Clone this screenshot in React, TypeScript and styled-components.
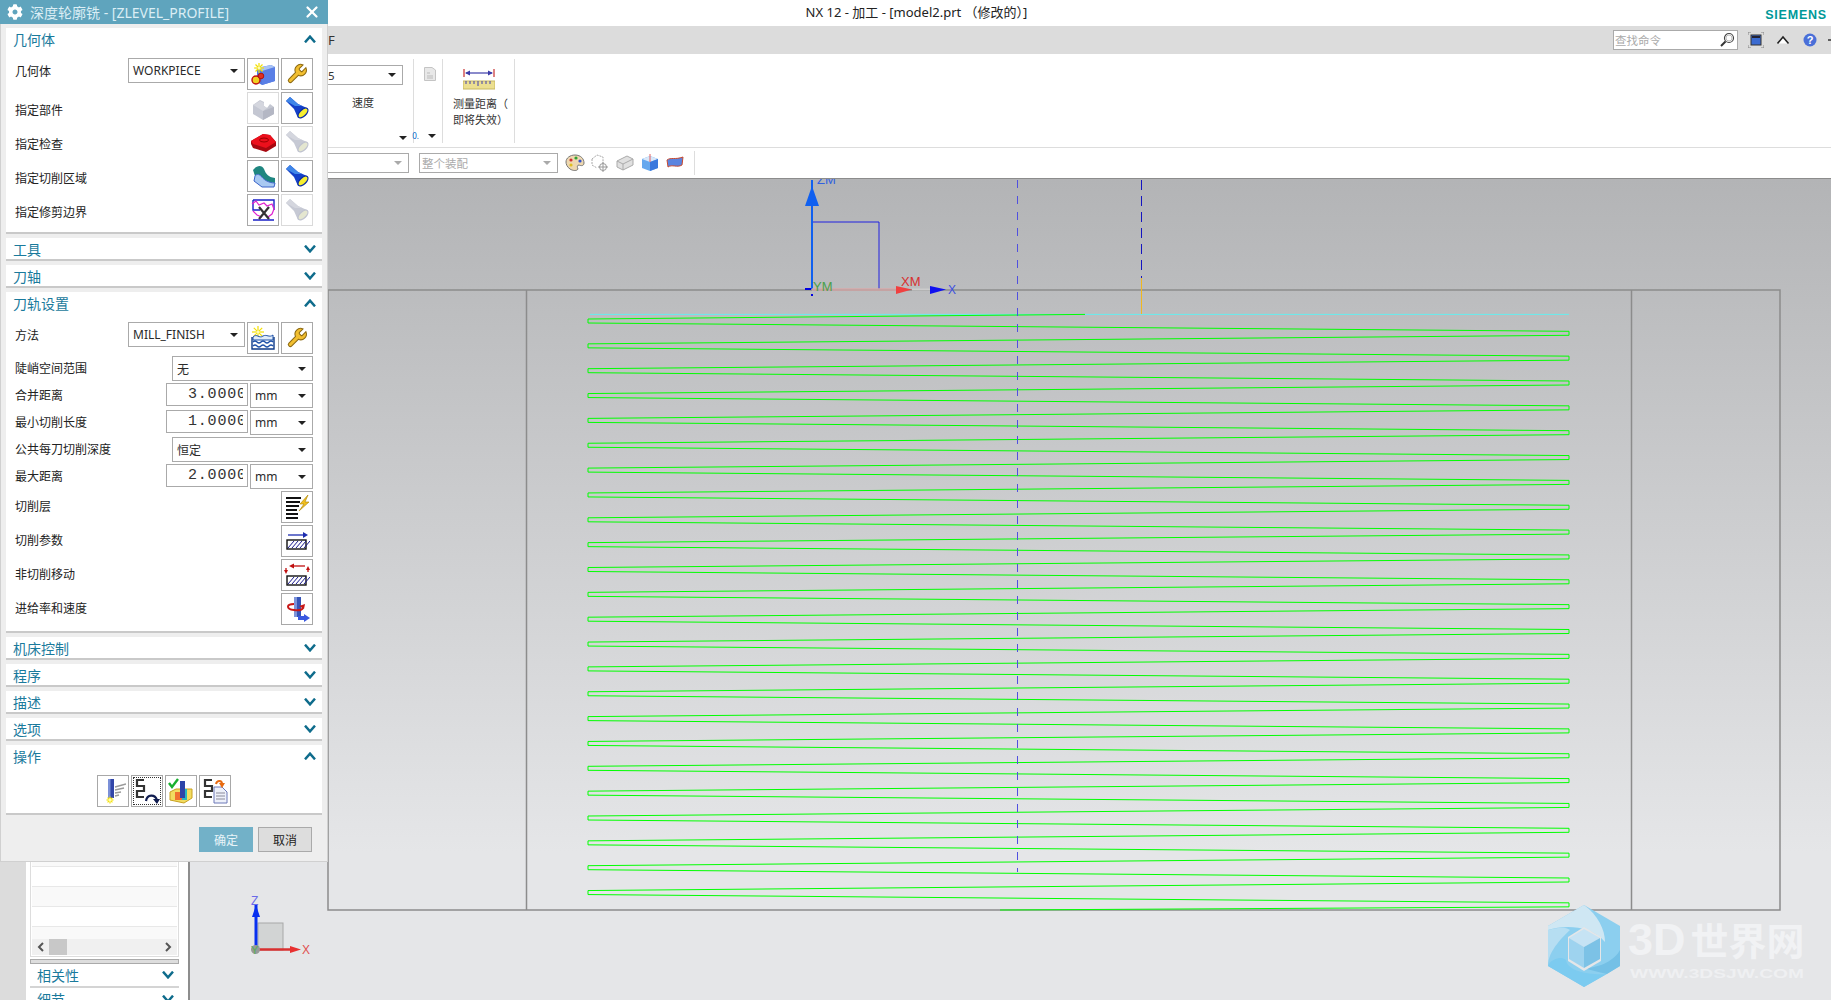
import React from "react";
import styled, { createGlobalStyle } from "styled-components";
import { X as CloseX } from "lucide-react";
import { FaCog } from "react-icons/fa";

const Global = createGlobalStyle`
  html, body { margin: 0; padding: 0; background: #fff; height: 1000px; overflow: hidden; }
  body { font-family: "Noto Sans CJK SC", "Liberation Sans", sans-serif; }
`;
const UI = `"Noto Sans", "Noto Sans CJK SC", sans-serif`;

const Page = styled.div`
  position: relative; width: 1831px; height: 1000px; overflow: hidden;
  display: flex; flex-direction: column; color: #222;
`;
const TitleBar = styled.div`
  height: 26px; flex: none; display: grid; grid-template-columns: 1fr auto 1fr; align-items: center; background: #fff;
`;
const AppTitle = styled.div`grid-column: 2; font: 13px ${UI}; color: #222; padding: 0 0 4px 2px;`;
const Brand = styled.div`
  grid-column: 3; justify-self: end; padding: 3px 4px 0 0; font: 700 12.5px "Liberation Sans", sans-serif; letter-spacing: .8px; color: #009999;
`;
const CommandBar = styled.div`
  height: 28px; flex: none; background: #dcdcdc; display: flex; align-items: center; padding-left: 328px; font: 13px ${UI}; color: #333;
`;
const CommandRight = styled.div`margin-left: auto; display: flex; align-items: center; margin-right: -11.5px;`;
const SearchBox = styled.div`
  width: 125px; height: 20px; box-sizing: border-box; background: #fff; border: 1px solid #aaa; display: flex; align-items: center; justify-content: space-between;
  font: 11.5px ${UI}; color: #aaa; padding: 0 2px 0 1px; margin-right: 4.5px;
`;
const TopIcon = styled.span<{ $w?: number }>`display: flex; width: ${p => p.$w ?? 27}px; justify-content: center;`;
const Ribbon = styled.div`height: 93px; flex: none; background: #fff; display: flex; align-items: flex-start;`;
const RibbonGroup = styled.div<{ $w: number }>`
  width: ${p => p.$w}px; height: 84px; margin-top: 5px; box-sizing: border-box; border-right: 1px solid #ddd; display: flex; flex-direction: column; font: 11px ${UI}; color: #333;
`;
const SpeedCol = styled.div`width: 103px; margin-left: 300px; padding-top: 6px; display: flex; flex: 1; flex-direction: column;`;
const SpeedLabel = styled.div`margin-top: 9px; padding-left: 52px; line-height: 18px;`;
const GroupCaret = styled.div<{ $nudge?: number; $pad?: number }>`
  margin-top: auto; margin-bottom: ${p => p.$pad ?? 3}px; margin-right: ${p => p.$nudge ?? 0}px; align-self: flex-end; display: flex; align-items: center; gap: 9px; line-height: 8px; font-size: 8px; color: #06c;
`;
const DocIconWrap = styled.div`padding: 8px 0 0 10px;`;
const RulerWrap = styled.div`padding: 10px 0 0 20px; height: 22px;`;
const RulerText = styled.div`padding: 5px 0 0 10px; line-height: 16px; white-space: nowrap;`;
const Toolbar = styled.div`
  height: 32px; flex: none; box-sizing: border-box; background: #fff; border-top: 1px solid #ddd; border-bottom: 1px solid #8c8c8c; display: flex; align-items: center; padding-left: 300px;
`;
const ToolSelect = styled.div<{ $w: number; $gap?: number; $indent?: number; $live?: boolean }>`
  width: ${p => p.$w}px; height: 20px; box-sizing: border-box; border: 1px solid #aaa; display: flex; align-items: center; justify-content: space-between; padding: 0 6px 0 ${p => p.$indent ?? 2}px; font: 11.5px ${UI}; color: ${p => (p.$live ? "#333" : "#aaa")}; margin-right: ${p => p.$gap ?? 10}px;
`;
const ToolIcons = styled.div`display: flex; gap: 5px; margin-left: 7px;`;
const ToolSep = styled.div`width: 1px; height: 24px; background: #ddd; margin-left: 9px;`;
const Workspace = styled.div`flex: 1; min-height: 0; display: flex;`;
const Sidebar = styled.div`width: 190px; flex: none; background: #dcdcdc; padding-left: 26px; box-sizing: border-box; display: flex;`;
const NavPanel = styled.div`flex: 1; background: #fff; border-right: 2px solid #8d8d8d; display: flex; flex-direction: column; padding: 0 9px 0 4px; min-width: 0;`;
const ListBox = styled.div`flex: 1; min-height: 0; border: 1px solid #ddd; border-width: 0 1px 1px; display: flex; flex-direction: column; justify-content: flex-end; padding: 0 1px 1px; overflow: hidden;`;
const ListRow = styled.div<{ $alt?: boolean; $h?: number }>`
  flex: none; height: ${p => p.$h ?? 19}px; background: ${p => (p.$alt ? "#f9f9f9" : "#fff")}; border-bottom: 1px solid ${p => (p.$h ? "transparent" : "#e8e8e8")};
`;
const HScroll = styled.div`height: 16px; flex: none; background: #f0f0f0; display: flex; align-items: center; justify-content: space-between; position: relative; padding: 0 5px;`;
const HThumb = styled.div`position: absolute; left: 17px; top: 0; width: 18px; height: 16px; background: #c8c8c8;`;
const Splitter = styled.div`height: 5px; flex: none; margin-top: 2px; box-sizing: border-box; border: 1px solid #aaa; background: #ddd;`;
const NavHeader = styled.div<{ $h: number }>`
  height: ${p => p.$h}px; flex: none; overflow: hidden; box-sizing: border-box; display: flex; align-items: flex-start; justify-content: space-between; padding: 0 5px 0 7px; font: 14px/23px "Noto Sans CJK SC", sans-serif; color: #1a7a9c;
  border-bottom: ${p => (p.$h > 20 ? "2px solid #d4d4d4" : "none")};
`;
const NavChevron = styled.span`display: flex; padding-top: 7px;`;
const Viewport = styled.div`
  flex: 1; min-width: 0; background: linear-gradient(180deg, #b3b4b6 0%, #e5e6e8 82%, #e5e6e8 100%);
`;
const Scene = styled.svg`display: block; width: 100%; height: 100%;`;

const Dialog = styled.div`
  position: absolute; left: 0; top: 0; width: 328px; height: 862px; background: #eeeeee; box-sizing: border-box; border: 1px solid #d0d0d0; border-width: 0 1px 1px 1px; display: flex; flex-direction: column;
`;
const DialogBar = styled.div`
  height: 24px; flex: none; margin: 0 -1px; background: #5fa4bd; display: flex; align-items: center; gap: 7px; padding: 0 7px; color: #fff;
`;
const DialogTitle = styled.div`flex: 1; font: 14px ${UI}; color: #dbeef5; white-space: nowrap;`;
const Sections = styled.div`padding: 4px 5px 0; display: flex; flex-direction: column; gap: 4px;`;
const Section = styled.div`background: #fff; border-bottom: 2px solid #c9c9c9;`;
const SectionHead = styled.div<{ $open?: boolean }>`
  height: ${p => (p.$open ? 30 : 21)}px; box-sizing: border-box; padding: ${p => (p.$open ? "0 6px 8px 7px" : "0 6px 0 7px")}; display: flex; align-items: center; justify-content: space-between; font: 14px "Noto Sans CJK SC", sans-serif; color: #1a7a9c;
`;
const SectionBody = styled.div`padding: 0 9px 6px; display: flex; flex-direction: column; gap: 2px;`;
const Row = styled.div`display: flex; align-items: center; gap: 2px; min-height: 25px;`;
const Label = styled.div<{ $up?: number; $down?: number; $top?: boolean }>`
  flex: 1; font: 12px "Noto Sans CJK SC", sans-serif; color: #222; white-space: nowrap;
  padding: ${p => p.$down ?? 0}px 0 ${p => p.$up ?? 0}px;
  ${p => (p.$top ? "align-self: flex-start; line-height: 25px;" : "")}
`;
const Select = styled.div<{ $w: number; $top?: boolean }>`
  width: ${p => p.$w}px; height: 25px; box-sizing: border-box; background: #fff; border: 1px solid #aaa; display: flex; align-items: center; justify-content: space-between; padding: 0 6px 0 4px; font: 12px ${UI}; color: #2a2a2a; white-space: nowrap;
  ${p => (p.$top ? "align-self: flex-start;" : "")}
`;
const NumberBox = styled.div`
  width: 82px; height: 23px; align-self: flex-start; box-sizing: border-box; background: #fff; border: 1px solid #aaa; padding: 0 4px 0 21px; display: flex; align-items: center;
`;
const NumberText = styled.span`display: block; overflow: hidden; white-space: nowrap; font: 15px "Liberation Mono", monospace; letter-spacing: .8px; color: #333; width: 100%;`;
const Caret = styled.span<{ $muted?: boolean }>`
  flex: none; width: 0; height: 0; border-left: 4px solid transparent; border-right: 4px solid transparent; border-top: 4px solid ${p => (p.$muted ? "#aaa" : "#222")};
`;
const IconBtn = styled.div<{ $dim?: boolean; $focus?: boolean }>`
  position: relative; flex: none; width: 32px; height: 32px; box-sizing: border-box; background: #fff; border: 1px solid ${p => (p.$dim ? "#dadada" : "#a8a8a8")}; display: flex; align-items: center; justify-content: center;
  outline: ${p => (p.$focus ? "1px dotted #333" : "none")}; outline-offset: -3px;
`;
const ActionRow = styled.div`display: flex; justify-content: center; gap: 2px; padding: 0 0 6px;`;
const Footer = styled.div`display: flex; justify-content: flex-end; gap: 5px; padding: 12px 15px 0 0;`;
const Btn = styled.div<{ $primary?: boolean }>`
  width: 54px; height: 25px; box-sizing: border-box; display: flex; align-items: center; justify-content: center; font: 12px "Noto Sans CJK SC", sans-serif;
  background: ${p => (p.$primary ? "#72b1c8" : "#dddddd")}; color: ${p => (p.$primary ? "#e8f4f8" : "#222")}; border: 1px solid ${p => (p.$primary ? "#72b1c8" : "#aaa")};
`;

const Chevron = ({ up }: { up?: boolean }) => (
  <svg width={12} height={8} viewBox="0 0 12 8">
    <polyline points={up ? "1,7.4 6,1.6 11,7.4" : "1,.6 6,6.4 11,.6"} fill="none" stroke="#0f6c8c" strokeWidth="2.4" />
  </svg>
);
const ScrollArrow = ({ left }: { left?: boolean }) => (
  <svg width={7} height={10} viewBox="0 0 7 10">
    <polyline points={left ? "6,1 2,5 6,9" : "1,1 5,5 1,9"} fill="none" stroke="#555" strokeWidth="2" />
  </svg>
);

const I = ({ children, s = 26 }: { children: React.ReactNode; s?: number }) => (
  <svg width={s} height={s} viewBox="0 0 26 26">{children}</svg>
);
const Star = ({ x, y, r = 5 }: { x: number; y: number; r?: number }) => (
  <g stroke="#f4e000" strokeWidth="1.2">
    <line x1={x - r} y1={y} x2={x + r} y2={y} /><line x1={x} y1={y - r} x2={x} y2={y + r} />
    <line x1={x - r * .7} y1={y - r * .7} x2={x + r * .7} y2={y + r * .7} /><line x1={x - r * .7} y1={y + r * .7} x2={x + r * .7} y2={y - r * .7} />
    <circle cx={x} cy={y} r={1.5} fill="#fffbb0" stroke="none" />
  </g>
);
const GeomIcon = () => (
  <I>
    <polygon points="7,7 21,4 25,6 25,20 12,24 7,21" fill="#4f78e0" />
    <polygon points="12,10 25,6 25,20 12,24" fill="#5a7fe6" />
    <polygon points="7,7 21,4 25,6 12,10" fill="#a9c3f5" />
    <Star x={9} y={7} r={5} />
    <circle cx={6} cy={19} r={4} fill="#f0d020" stroke="#c01010" strokeWidth="1.4" />
    <circle cx={11} cy={15} r={2.8} fill="#e03020" stroke="#b01010" />
  </I>
);
const WrenchIcon = () => (
  <I>
    <path transform="translate(1.5 1.5) scale(.95)" d="M14.7 6.3a1 1 0 0 0 0 1.4l1.6 1.6a1 1 0 0 0 1.4 0l3.77-3.77a6 6 0 0 1-7.94 7.94l-6.91 6.91a2.12 2.12 0 0 1-3-3l6.91-6.91a6 6 0 0 1 7.94-7.94l-3.76 3.76z" fill="#f2bf30" stroke="#8d6a12" strokeWidth="1.1" />
  </I>
);
const PartIcon = () => (
  <I>
    <polygon points="3,10 10,5 14,7 14,11 17,13 20,9 24,12 24,19 13,25 3,19" fill="#c4c7d2" />
    <polygon points="13,16 24,12 24,19 13,25" fill="#b4b7c4" />
    <polygon points="3,10 10,6 14,8 14,11 17,13 13,16" fill="#d4d6de" />
  </I>
);
const Flash = ({ dim }: { dim?: boolean }) => (
  <I>
    <polygon points="2,6 6,2 14,9 23,13 14,23 10,14" fill={dim ? "#c6c9d4" : "#1440c8"} />
    <polygon points="2,6 6,2 14,9 18,11 11,11" fill={dim ? "#d4d6de" : "#3f86e8"} />
    <ellipse cx="19" cy="18" rx="6.2" ry="3.2" transform="rotate(-45 19 18)" fill={dim ? "#e4e6d0" : "#f6ee30"} stroke={dim ? "#bfc2cf" : "#0a2aa0"} strokeWidth="1.3" />
  </I>
);
const CheckIcon = () => (
  <I>
    <polygon points="1,12 13,5 20,6 26,13 26,17 16,23 3,19 1,15" fill="#a80810" />
    <polygon points="1,12 13,5 20,6 26,13 16,19 3,15" fill="#ec101c" />
    <ellipse cx="14" cy="11" rx="4.5" ry="2" fill="none" stroke="#900" strokeWidth="1" />
  </I>
);
const AreaIcon = () => (
  <I>
    <path d="M3,7 C7,2 12,2 14,6 C16,11 18,14 25,15 L25,20 C18,20 13,16 11,13 C9,11 6,11 5,13 Z" fill="#1f8680" />
    <path d="M5,13 C6,11 9,11 11,13 C13,16 18,20 25,20 L24,24 L12,24 L4,18 Z" fill="#a9c9f2" stroke="#3a62c8" strokeWidth="1" />
  </I>
);
const TrimIcon = () => (
  <I>
    <path d="M3,3 H24 V13 M3,3 V13 H10 M3,23 H24" fill="none" stroke="#1a20c8" strokeWidth="1.4" />
    <path d="M2,7 L6,4 L9,8 L14,6 L17,9 L22,7 L24,12 L22,17 L18,20 M3,14 L7,18 L12,20" fill="none" stroke="#e020d0" strokeWidth="1.2" />
    <path d="M9,10 L19,22 M19,10 L9,22" stroke="#333" strokeWidth="2.2" />
  </I>
);
const MethodIcon = () => (
  <I>
    <Star x={8} y={7} r={6} />
    <path d="M3,12 C7,8 9,14 13,11 C17,9 19,13 23,10 V15 H3 Z" fill="#e0ecfa" stroke="#1d50a8" />
    <path d="M3,17 q2,-2 4,0 t4,0 t4,0 t4,0 t4,0 M3,21 q2,-2 4,0 t4,0 t4,0 t4,0 t4,0" fill="none" stroke="#1d50a8" strokeWidth="1.3" />
    <path d="M2,12 V24 H24 V12" fill="none" stroke="#0e3a88" strokeWidth="1.4" />
  </I>
);
const LayersIcon = () => (
  <I>
    <path d="M2,4 H17 M2,8 H16 M2,12 H15 M2,16 H13 M2,20 H14 M2,24 H14" stroke="#111" strokeWidth="2" />
    <polygon points="24,1 16,10 20,10 15,17 25,8 21,8" fill="#f2c020" stroke="#a88000" strokeWidth=".6" />
  </I>
);
const Hatch = ({ y = 12 }: { y?: number }) => (
  <>
    <rect x="3" y={y} width="19" height="9" fill="#fff" stroke="#111" strokeWidth="1.4" />
    {[0, 4, 8, 12, 16].map(o => <line key={o} x1={4 + o} y1={y + 8} x2={10 + o} y2={y + 1} stroke="#1a1a90" strokeWidth="1" />)}
  </>
);
const CutParamIcon = () => (
  <I>
    <path d="M4,7 H20" stroke="#1c2cb0" strokeWidth="1.3" /><polygon points="19,4 24,7 19,10" fill="#1c2cb0" />
    <Hatch />
  </I>
);
const NonCutIcon = () => (
  <I>
    <path d="M7,4 H21" stroke="#c01010" strokeWidth="1.3" /><polygon points="10,1.5 5,4 10,6.5" fill="#c01010" />
    <path d="M2,6 V9 M24,6 V10" stroke="#c01010" strokeWidth="1.3" />
    <polygon points="0,8 4,8 2,12" fill="#c01010" /><polygon points="22,8 26,8 24,4" fill="#c01010" />
    <Hatch y={14} />
  </I>
);
const FeedIcon = () => (
  <I>
    <rect x="10" y="1" width="7" height="20" fill="#3554b8" />
    <rect x="10" y="1" width="3" height="20" fill="#7e94da" />
    <path d="M10,8 C2,8 2,13 10,14 C16,15 21,13 18,10" fill="none" stroke="#c81818" strokeWidth="2" />
    <polygon points="15,10 21,8 20,13" fill="#c81818" />
    <path d="M14,22 H21" stroke="#3a58e0" strokeWidth="4" /><polygon points="20,18 26,22 20,26" fill="#3a58e0" />
  </I>
);
const GenIcon = () => (
  <I>
    <rect x="8" y="1" width="6" height="19" fill="#3246a8" /><rect x="8" y="1" width="2.5" height="19" fill="#7b90d8" />
    <path d="M15,9 L26,6 M15,12 L24,10 M15,15 L21,14 M15,18 L19,17" stroke="#9a9a9a" strokeWidth="1.4" />
    <Star x={10} y={22} r={3.5} />
  </I>
);
const Snake = () => <path d="M11,2 H4 V8 H11 V13 H4 V19 H11" fill="none" stroke="#333" strokeWidth="2.2" transform="translate(-1 0)" />;
const ReplayIcon = () => (
  <I>
    <Snake />
    <path d="M12,23 C13,16 21,16 23,22" fill="none" stroke="#101c50" strokeWidth="2.2" />
    <polygon points="19,21 26,21 23,26" fill="#101c50" />
  </I>
);
const VerifyIcon = () => (
  <I>
    <polygon points="2,14 8,11 24,11 24,20 16,25 2,22" fill="#f2dc60" stroke="#c8a020" />
    <rect x="7" y="14" width="7" height="8" fill="#f07030" /><rect x="14" y="11" width="5" height="11" fill="#28b8c0" />
    <rect x="12" y="3" width="5" height="17" fill="#2c44a8" />
    <path d="M1,5 L4,9 L10,1" fill="none" stroke="#18b030" strokeWidth="2.4" />
  </I>
);
const ListIcon = () => (
  <I>
    <Snake />
    <polygon points="12,9 20,9 25,14 25,25 12,25" fill="#eef1fa" stroke="#6c78b8" />
    <path d="M14,15 H23 M14,18 H23 M14,21 H23" stroke="#8a8a9a" />
    <path d="M14,6 C15,2 20,2 20,6" fill="none" stroke="#e86a10" strokeWidth="2" />
    <polygon points="17,5 23,5 20,10" fill="#e86a10" />
  </I>
);

const rowsK = Array.from({ length: 24 }, (_, k) => k);
const P = 24.85;
const Toolpath = () => (
  <g fill="none" stroke="#00ff00" strokeWidth="1">
    <line x1="588" y1="319" x2="1085" y2="314.4" />
    {rowsK.map(k => {
      const L = 319 + k * P;
      const R = 331.3 + k * P;
      const d = `M588 ${L} V${L + 4} L1569 ${R} V${R + 4} ${k < 23 ? `L588 ${L + P}` : "L1000 910"}`;
      return <path key={k} d={d} />;
    })}
  </g>
);
const Hexagon = () => (
  <g>
    <polygon points="1584,905 1620,926 1620,966 1584,987 1548,966 1548,926" fill="#8ccfef" />
    <path d="M1584,905 L1548,926 L1548,930 C1565,925 1590,925 1605,942 C1605,930 1598,915 1584,905 Z" fill="#cfe7f3" />
    <path d="M1548,930 L1548,966 C1548,950 1565,935 1570,930 C1565,926 1555,928 1548,930 Z" fill="#b6def2" />
    <path d="M1548,966 L1584,987 L1607,974 C1590,975 1568,972 1566,960 C1560,955 1550,960 1548,966 Z" fill="#7ccbf0" />
    <path d="M1620,950 L1620,966 L1607,974 C1598,972 1590,970 1584,968 C1600,968 1615,960 1620,950 Z" fill="#74c0e6" />
    <polygon points="1568,937 1584,927 1601,937 1601,961 1584,971 1568,961" fill="#e5e6e8" />
    <polygon points="1569,938 1584,929 1600,938 1584,947" fill="#c6e3f4" />
    <polygon points="1569,938 1584,947 1584,968 1569,959" fill="#9ed3ef" />
    <polygon points="1600,938 1584,947 1584,968 1600,959" fill="#7cc2e6" />
  </g>
);

const Sec = ({ title }: { title: string }) => (
  <Section><SectionHead>{title}<Chevron /></SectionHead></Section>
);

export default function App() {
  return (
    <>
      <Global />
      <Page>
        <TitleBar>
          <AppTitle>NX 12 - 加工 - [model2.prt （修改的）]</AppTitle>
          <Brand>SIEMENS</Brand>
        </TitleBar>
        <CommandBar>
          F
          <CommandRight>
            <SearchBox>
              查找命令
              <svg width="16" height="16" viewBox="0 0 16 16"><circle cx="10" cy="6" r="4.5" fill="#fff" stroke="#444" strokeWidth="1.2" /><circle cx="10" cy="6" r="3" fill="none" stroke="#bbb" /><path d="M6.5,9.5 L2,14" stroke="#333" strokeWidth="2" /></svg>
            </SearchBox>
            <TopIcon><svg width="16" height="16" viewBox="0 0 16 16"><path d="M0,3 V0 H3 M13,0 H16 V3 M16,13 V16 H13 M3,16 H0 V13" fill="none" stroke="#888" /><rect x="3" y="3" width="10" height="10" fill="#3a6ad0" stroke="#333" /><rect x="4" y="4" width="8" height="2" fill="#223" /></svg></TopIcon>
            <TopIcon><svg width="14" height="10" viewBox="0 0 14 10"><polyline points="1.5,8.5 7,2 12.5,8.5" fill="#fff" stroke="#222" strokeWidth="1.6" /></svg></TopIcon>
            <TopIcon><svg width="14" height="14" viewBox="0 0 14 14"><circle cx="7" cy="7" r="6.5" fill="#4a6fd8" /><text x="7" y="11" textAnchor="middle" fontSize="11" fontWeight="700" fontFamily="Liberation Sans" fill="#fff">?</text></svg></TopIcon>
            <TopIcon $w={19}><svg width="14" height="8" viewBox="0 0 14 8"><path d="M2,4 H12 M6,1 V7" stroke="#333" strokeWidth="1.4" /></svg></TopIcon>
          </CommandRight>
        </CommandBar>
        <Ribbon>
          <RibbonGroup $w={414}>
            <SpeedCol>
              <ToolSelect $w={103} $gap={0} $indent={27} $live>5<Caret /></ToolSelect>
              <SpeedLabel>速度</SpeedLabel>
              <GroupCaret $nudge={-4}><Caret /></GroupCaret>
            </SpeedCol>
          </RibbonGroup>
          <RibbonGroup $w={29}>
            <DocIconWrap><svg width="12" height="14" viewBox="0 0 12 14"><path d="M.5,.5 H8 L11.5,3 V13.5 H.5 Z" fill="#e8e8e8" stroke="#c4c4c4" /><path d="M3,6 H6 M3,9 H9 M3,11 H9" stroke="#bbb" /></svg></DocIconWrap>
            <GroupCaret $nudge={6} $pad={3}>0.<Caret /></GroupCaret>
          </RibbonGroup>
          <RibbonGroup $w={72}>
            <RulerWrap>
              <svg width="32" height="21" viewBox="0 0 32 21"><path d="M1,0 V8 M31,0 V8" stroke="#c83030" strokeWidth="1.2" /><path d="M3,4 H29" stroke="#3c3ca8" strokeWidth="1.2" /><polygon points="2,4 7,1.5 7,6.5" fill="#3c3ca8" /><polygon points="30,4 25,1.5 25,6.5" fill="#3c3ca8" /><rect x="0" y="12" width="32" height="8" fill="#ecdf90" stroke="#c8b860" /><path d="M3,12 V15 M7,12 V15 M11,12 V15 M15,12 V17 M19,12 V15 M23,12 V15 M27,12 V15" stroke="#4040b0" /></svg>
            </RulerWrap>
            <RulerText>测量距离（<br />即将失效）</RulerText>
          </RibbonGroup>
        </Ribbon>
        <Toolbar>
          <ToolSelect $w={109}><span /><Caret $muted /></ToolSelect>
          <ToolSelect $w={139} $gap={0}>整个装配<Caret $muted /></ToolSelect>
          <ToolIcons>
            <svg width="20" height="18" viewBox="0 0 20 18"><path d="M10,1 C16,1 19,5 19,9 C19,12 16,12 14,11 C12,11 12,13 13,15 C12,17 8,17 5,15 C2,13 1,10 1,8 C1,4 5,1 10,1 Z" fill="#eed8b0" stroke="#777" /><circle cx="6" cy="6" r="1.6" fill="#d03030" /><circle cx="11" cy="4" r="1.6" fill="#30a030" /><circle cx="15" cy="7" r="1.6" fill="#3050d0" /><circle cx="6" cy="11" r="1.6" fill="#e0c020" /></svg>
            <svg width="20" height="18" viewBox="0 0 20 18"><path d="M2,5 L7,1 L13,3 L13,9 M2,5 V11 L7,14" fill="none" stroke="#aaa" strokeDasharray="2 1" /><circle cx="13" cy="13" r="3.5" fill="none" stroke="#999" /><path d="M13,8 V18 M8,13 H18" stroke="#999" /></svg>
            <svg width="20" height="18" viewBox="0 0 20 18"><path d="M2,7 L12,2 L18,5 L18,11 L8,16 L2,13 Z" fill="#e0e0e0" stroke="#aaa" /><path d="M2,7 L8,10 L18,5 M8,10 V16" fill="none" stroke="#aaa" /></svg>
            <svg width="20" height="18" viewBox="0 0 20 18"><polygon points="2,5 10,2 18,5 18,14 10,17 2,14" fill="#66a8ee" /><polygon points="2,5 10,2 18,5 10,8" fill="#d8e8fa" /><polygon points="10,8 18,5 18,14 10,17" fill="#3a78dd" /><path d="M10,0 V8" stroke="#e06060" /></svg>
            <svg width="20" height="18" viewBox="0 0 20 18"><path d="M2,6 C6,3 10,6 18,3 L17,11 C12,14 7,10 3,13 Z" fill="#5a84e0" stroke="#c84a30" /></svg>
          </ToolIcons>
          <ToolSep />
        </Toolbar>
        <Workspace>
          <Sidebar>
            <NavPanel>
              <ListBox>
                <ListRow $alt /><ListRow /><ListRow $alt /><ListRow /><ListRow $alt $h={11} />
                <HScroll><ScrollArrow left /><HThumb /><ScrollArrow /></HScroll>
              </ListBox>
              <Splitter />
              <NavHeader $h={24}>相关性<NavChevron><Chevron /></NavChevron></NavHeader>
              <NavHeader $h={12}>细节<NavChevron><Chevron /></NavChevron></NavHeader>
            </NavPanel>
          </Sidebar>
          <Viewport>
            <Scene viewBox="190 179 1641 821">
              <g fill="none" stroke="#8c8c8c" strokeWidth="1.5">
                <polyline points="328,290 1780,290 1780,910 328,910 328,290" />
                <line x1="526.5" y1="290" x2="526.5" y2="910" />
                <line x1="1631.5" y1="290" x2="1631.5" y2="910" />
              </g>
              <line x1="590" y1="314.4" x2="1569" y2="314.4" stroke="#66eeee" strokeWidth="1" />
              <Toolpath />
              <line x1="1017.5" y1="180" x2="1017.5" y2="872" stroke="#5050e0" strokeDasharray="8 8" />
              <line x1="1141.5" y1="180" x2="1141.5" y2="278" stroke="#1414c0" strokeDasharray="10 6" />
              <line x1="1141.5" y1="278" x2="1141.5" y2="314" stroke="#f0b820" />
              <polyline points="812,222 879,222 879,289" fill="none" stroke="#2020e0" />
              <line x1="812" y1="180" x2="812" y2="289" stroke="#1060f0" strokeWidth="2" />
              <polygon points="812,186 805,206 819,206" fill="#1060f0" />
              <rect x="811" y="294" width="2" height="2" fill="#0000e0" />
              <rect x="805" y="288" width="6" height="2" fill="#0000e0" />
              <rect x="812" y="288" width="86" height="3" fill="#d8a8a8" opacity=".7" />
              <polygon points="896,286 912,289.5 896,294" fill="#f04040" />
              <rect x="912" y="288.5" width="20" height="2" fill="#ccc" />
              <polygon points="930,286 946,289.5 930,294" fill="#1010f0" />
              <text x="817" y="184" fontSize="13" fontFamily="Liberation Sans" fill="#3060e0">ZM</text>
              <text x="813" y="291" fontSize="13" fontFamily="Liberation Sans" fill="#4aa04a">YM</text>
              <text x="901" y="286" fontSize="13" fontFamily="Liberation Sans" fill="#d83030">XM</text>
              <text x="948" y="294" fontSize="12" fontFamily="Liberation Sans" fill="#4050e0">X</text>

              <rect x="258" y="923" width="25" height="27" fill="#d2d4d4" stroke="#a8a8a8" />
              <line x1="256" y1="905" x2="256" y2="948" stroke="#0830f0" strokeWidth="3" />
              <polygon points="256,905 252,917 260,917" fill="#0830f0" />
              <line x1="258" y1="949.5" x2="292" y2="949.5" stroke="#d83030" strokeWidth="2.5" />
              <polygon points="290,946 301,949.5 290,953" fill="#e83030" />
              <circle cx="255.5" cy="949.5" r="4.5" fill="#999" />
              <text x="251" y="905" fontSize="12" fontFamily="Liberation Sans" fill="#6a6ae8">Z</text>
              <text x="251" y="954" fontSize="11" fontFamily="Liberation Sans" fill="#58b058">Y</text>
              <text x="302" y="954" fontSize="12" fontFamily="Liberation Sans" fill="#e05050">X</text>

              <Hexagon />
              <text x="1628" y="955" fill="#f1f2f4" fontWeight="700" fontFamily="Liberation Sans" fontSize="45">3D<tspan fontFamily="Noto Sans CJK SC" fontSize="38" dx="5">世界网</tspan></text>
              <text x="1630" y="978" fill="#eff0f2" fontWeight="700" fontFamily="Liberation Sans" fontSize="12" textLength="174" lengthAdjust="spacingAndGlyphs">WWW.3DSJW.COM</text>
            </Scene>
          </Viewport>
        </Workspace>

        <Dialog>
          <DialogBar>
            <FaCog size={16} color="#fff" />
            <DialogTitle>深度轮廓铣 - [ZLEVEL_PROFILE]</DialogTitle>
            <CloseX size={18} strokeWidth={3} color="#fff" />
          </DialogBar>
          <Sections>
            <Section>
              <SectionHead $open>几何体<Chevron up /></SectionHead>
              <SectionBody>
                <Row><Label $top>几何体</Label><Select $w={117} $top>WORKPIECE<Caret /></Select><IconBtn><GeomIcon /></IconBtn><IconBtn><WrenchIcon /></IconBtn></Row>
                <Row><Label $down={2}>指定部件</Label><IconBtn $dim><PartIcon /></IconBtn><IconBtn><Flash /></IconBtn></Row>
                <Row><Label $down={2}>指定检查</Label><IconBtn><CheckIcon /></IconBtn><IconBtn $dim><Flash dim /></IconBtn></Row>
                <Row><Label $down={2}>指定切削区域</Label><IconBtn><AreaIcon /></IconBtn><IconBtn><Flash /></IconBtn></Row>
                <Row><Label $down={2}>指定修剪边界</Label><IconBtn><TrimIcon /></IconBtn><IconBtn $dim><Flash dim /></IconBtn></Row>
              </SectionBody>
            </Section>
            <Sec title="工具" />
            <Sec title="刀轴" />
            <Section>
              <SectionHead $open>刀轨设置<Chevron up /></SectionHead>
              <SectionBody>
                <Row><Label $top>方法</Label><Select $w={117} $top>MILL_FINISH<Caret /></Select><IconBtn><MethodIcon /></IconBtn><IconBtn><WrenchIcon /></IconBtn></Row>
                <Row><Label $up={2}>陡峭空间范围</Label><Select $w={141}>无<Caret /></Select></Row>
                <Row><Label $up={2}>合并距离</Label><NumberBox><NumberText>3.00000</NumberText></NumberBox><Select $w={63}>mm<Caret /></Select></Row>
                <Row><Label $up={2}>最小切削长度</Label><NumberBox><NumberText>1.00000</NumberText></NumberBox><Select $w={63}>mm<Caret /></Select></Row>
                <Row><Label $up={2}>公共每刀切削深度</Label><Select $w={141}>恒定<Caret /></Select></Row>
                <Row><Label $up={3}>最大距离</Label><NumberBox><NumberText>2.00000</NumberText></NumberBox><Select $w={63}>mm<Caret /></Select></Row>
                <Row><Label $up={4}>切削层</Label><IconBtn><LayersIcon /></IconBtn></Row>
                <Row><Label $up={4}>切削参数</Label><IconBtn><CutParamIcon /></IconBtn></Row>
                <Row><Label $up={4}>非切削移动</Label><IconBtn><NonCutIcon /></IconBtn></Row>
                <Row><Label $up={4}>进给率和速度</Label><IconBtn><FeedIcon /></IconBtn></Row>
              </SectionBody>
            </Section>
            <Sec title="机床控制" />
            <Sec title="程序" />
            <Sec title="描述" />
            <Sec title="选项" />
            <Section>
              <SectionHead $open>操作<Chevron up /></SectionHead>
              <ActionRow>
                <IconBtn><GenIcon /></IconBtn>
                <IconBtn $focus><ReplayIcon /></IconBtn>
                <IconBtn><VerifyIcon /></IconBtn>
                <IconBtn><ListIcon /></IconBtn>
              </ActionRow>
            </Section>
          </Sections>
          <Footer>
            <Btn $primary>确定</Btn>
            <Btn>取消</Btn>
          </Footer>
        </Dialog>
      </Page>
    </>
  );
}
